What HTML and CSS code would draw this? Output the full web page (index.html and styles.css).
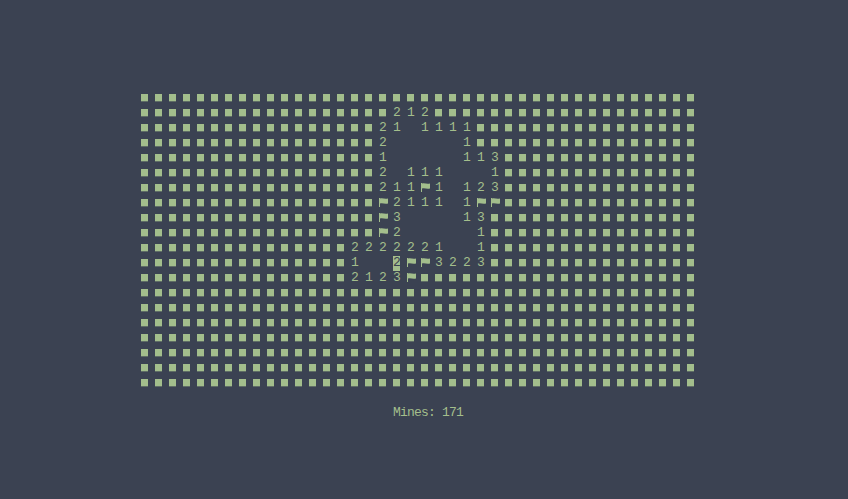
FILE: index.html
```html
<!DOCTYPE html>
<html lang="en">

<head>
    <meta charset="UTF-8">
    <meta name="viewport" content="width=device-width, initial-scale=1.0">
    <title>Minesweeper</title>
    <link rel="stylesheet" href="styles.css">
</head>

<body>
    <div id="board" class="board"></div>
    <div class="status">Mines: 171</div>
    <script src="script.js"></script>
</body>

</html>
```

FILE: styles.css
```css
/* Terminal screen */
body {
    margin: 0;
    padding: 91px 0 0 141px;
    height: 499px;
    box-sizing: border-box;
    overflow: hidden;
    background: #3b4252;
    color: #a3be8c;
    font-family: 'Liberation Mono', monospace;
    font-size: 13px;
    line-height: 14px;
}

/* Mine field */
.board {
    display: grid;
    grid-template-columns: repeat(40, 14px);
    grid-auto-rows: 15px;
}

.cell {
    width: 7px;
    height: 15px;
}

.square {
    overflow: hidden;
}

.square::before {
    content: "";
    display: block;
    width: 7px;
    height: 7px;
    margin-top: 3px;
    background: #a3be8c;
    box-shadow: 0 1px 0 rgba(163, 190, 140, 0.35);
}

.flag-icon {
    display: block;
    width: 10px;
    height: 10px;
    margin-top: 2px;
    fill: #a3be8c;
}

.cursor {
    background: #a3be8c;
    color: #3b4252;
}

/* Status line */
.status {
    margin-top: 15px;
    padding-left: 252px;
    letter-spacing: -0.8px;
}
```

FILE: script.js
```js
const COLS = 40;
const ROWS = 20;
const CURSOR = { row: 11, col: 18 };

// row number: [covered squares before the opened part, opened part]
const opened = {
    1: [18, '212'],
    2: [17, '21 1111'],
    3: [17, '2     1'],
    4: [17, '1     113'],
    5: [17, '2 111   1'],
    6: [17, '211F1 123'],
    7: [17, 'F2111 1FF'],
    8: [17, 'F3    13'],
    9: [17, 'F2     1'],
    10: [15, '2222221  1'],
    11: [15, '1  2FF3223'],
    12: [15, '2123F'],
};

const FLAG = '<svg class="flag-icon" viewBox="0 0 10 10"><path d="M0 0h1v9H0z"/><path d="M1 .6C3.5-.3 5.5 1.3 9 .5v5C5.5 6.3 3.500 4.700 1 5.600z"/></svg>';

const board = document.getElementById('board');

for (let row = 0; row < ROWS; row++) {
    const [start, text] = opened[row] || [COLS, ''];
    const line = '#'.repeat(start) + text;

    for (let col = 0; col < COLS; col++) {
        const ch = line[col] || '#';
        const cell = document.createElement('div');
        cell.className = 'cell';

        if (ch === '#') {
            cell.classList.add('square');
        } else if (ch === 'F') {
            cell.innerHTML = FLAG;
        } else {
            cell.textContent = ch;
        }

        if (row === CURSOR.row && col === CURSOR.col) {
            cell.classList.add('cursor');
        }
        board.appendChild(cell);
    }
}
```
